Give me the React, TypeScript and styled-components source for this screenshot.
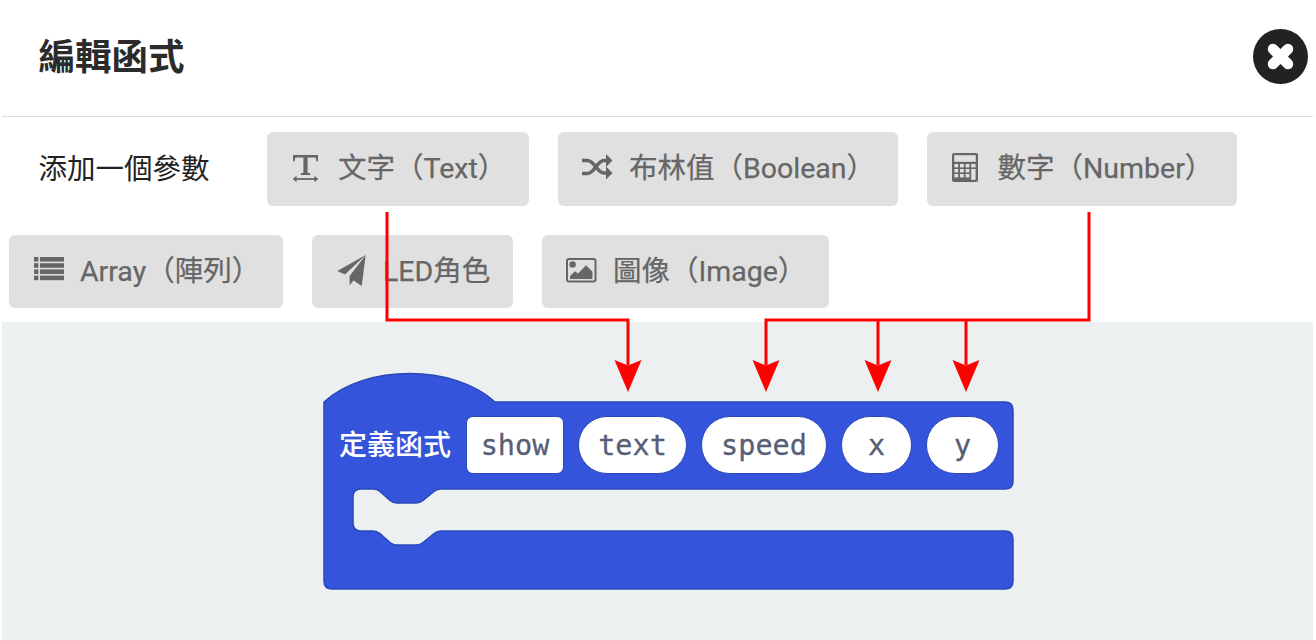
import React from "react";
import styled, { createGlobalStyle } from "styled-components";

const GlobalStyle = createGlobalStyle`
  html, body {
    margin: 0;
    background: #fff;
  }
`;

const cjk = `Roboto, "Noto Sans CJK TC", sans-serif`;

const TextIcon = () => (
  <IconSlot viewBox="0 0 32 32">
    <path d="M2 2H27V8.5H25.6L24.6 4.6H16.6V20H19.2V22H9.8V20H12.4V4.6H4.4L3.4 8.5H2Z" />
    <path d="M3 26H26" strokeWidth="1.8" stroke="#666" />
    <path d="M5.6 22.8 1.6 26 5.6 29.2ZM23.4 22.8 27.4 26 23.4 29.2Z" />
  </IconSlot>
);

const ShuffleIcon = () => (
  <IconSlot viewBox="0 0 32 32">
    <path
      d="M0 7.5H5.5C12.5 7.5 15 20 22 20H26M0 20.5H5.5C12.5 20.5 15 7.5 22 7.5H26"
      fill="none"
      stroke="#666"
      strokeWidth="3.6"
    />
    <path d="M24 1 30.5 7.5 24 14ZM24 13.5 30.5 20 24 26.5Z" />
  </IconSlot>
);

const CalculatorIcon = () => (
  <IconSlot viewBox="0 0 32 32">
    <rect x="1" y="0" width="26" height="29" rx="2" />
    <rect x="3.2" y="2.2" width="21.6" height="6.6" fill="#e0e0e0" />
    {[11, 16, 21].map((y) =>
      [3.4, 9, 14.6].map((x) => (
        <rect key={`${x}-${y}`} x={x} y={y} width="3.8" height="3.4" fill="#e0e0e0" />
      ))
    )}
    <rect x="20.2" y="11" width="4.4" height="3.4" fill="#e0e0e0" />
    <rect x="20.2" y="16" width="4.4" height="10.8" fill="#e0e0e0" />
  </IconSlot>
);

const ListIcon = () => (
  <IconSlot viewBox="0 0 32 32">
    {[1, 7.2, 13.4, 19.6].map((y) => (
      <g key={y}>
        <rect x="1" y={y} width="4.4" height="4.6" />
        <rect x="7" y={y} width="24" height="4.6" />
      </g>
    ))}
  </IconSlot>
);

const PlaneIcon = () => (
  <IconSlot viewBox="0 0 32 32">
    <path d="M29.7-1 1.3 15 9 18.6Z" />
    <path d="M29.7-1 13.6 20V29.2L17.6 24.4 25.7 30Z" />
  </IconSlot>
);

const ImageIcon = () => (
  <IconSlot viewBox="0 0 32 32">
    <rect x="1" y="3" width="28.5" height="22.5" rx="2" fill="none" stroke="#666" strokeWidth="2" />
    <circle cx="6.6" cy="8.4" r="3.2" />
    <path d="M4 23V20L9 15.2 12 17.4 20 9.2 26.4 15.4V23Z" />
  </IconSlot>
);

const CloseIcon = () => (
  <CloseGlyph viewBox="0 0 55 55">
    <circle cx="27.5" cy="27.5" r="27.5" fill="#222" />
    <path d="M20 20 35 35M35 20 20 35" stroke="#fff" strokeWidth="10.5" strokeLinecap="round" />
  </CloseGlyph>
);

const Arrows = () => (
  <ArrowLayer viewBox="0 0 1316 640">
    <path
      d="M387 212V320H628V365M1089 212V320H766V365M878 320V365M966 320V365"
      fill="none"
      stroke="#f00"
      strokeWidth="3"
    />
    {[628, 766, 878, 966].map((x) => (
      <path key={x} d={`M${x - 13.5} 360 L${x} 365.5 L${x + 13.5} 360 L${x} 392Z`} fill="#f00" />
    ))}
  </ArrowLayer>
);

const BlockOutline = () => (
  <BlockShape viewBox="0 0 692 218">
    <path
      d="M1 29C42-9 131-9 172 29H682Q690 29 690 37V108Q690 116 682 116H118Q114 116 111 118.5L100 127.5Q97 130 93 130H74Q70 130 67 127.5L57 118.5Q54 116 50 116H38Q30 116 30 124V150Q30 158 38 158H50Q54 158 57 160.5L67 169.5Q70 172 74 172H93Q97 172 100 169.5L111 160.5Q114 158 118 158H682Q690 158 690 166V208Q690 216 682 216H9Q1 216 1 208Z"
      fill="#3455db"
      stroke="#2b48b8"
      strokeWidth="1.5"
    />
  </BlockShape>
);

export default function App() {
  return (
    <Page>
      <GlobalStyle />
      <Header>
        <Title>編輯函式</Title>
        <CloseIcon />
      </Header>
      <ParamRows>
        <ParamRow>
          <ParamLabel>添加一個參數</ParamLabel>
          <ParamButton $width={262}>
            <TextIcon />
            <ButtonText>文字（Text）</ButtonText>
          </ParamButton>
          <ParamButton $width={339.5}>
            <ShuffleIcon />
            <ButtonText>布林值（Boolean）</ButtonText>
          </ParamButton>
          <ParamButton $width={310}>
            <CalculatorIcon />
            <ButtonText>數字（Number）</ButtonText>
          </ParamButton>
        </ParamRow>
        <ParamRow $second>
          <ParamButton $width={274}>
            <ListIcon />
            <ButtonText>Array（陣列）</ButtonText>
          </ParamButton>
          <ParamButton $width={201}>
            <PlaneIcon />
            <ButtonText>LED角色</ButtonText>
          </ParamButton>
          <ParamButton $width={287}>
            <ImageIcon />
            <ButtonText>圖像（Image）</ButtonText>
          </ParamButton>
        </ParamRow>
      </ParamRows>
      <Workspace>
        <Block>
          <BlockOutline />
          <BlockRow>
            <BlockLabel>定義函式</BlockLabel>
            <Field $width={98}>show</Field>
            <Field $pill $width={109}>text</Field>
            <Field $pill $width={126}>speed</Field>
            <Field $pill $width={71}>x</Field>
            <Field $pill $width={73}>y</Field>
          </BlockRow>
        </Block>
      </Workspace>
      <Arrows />
    </Page>
  );
}

const Page = styled.div`
  position: relative;
  width: 1316px;
  height: 640px;
  overflow: hidden;
  display: flex;
  flex-direction: column;
  font-family: ${cjk};
`;

const Header = styled.header`
  height: 113px;
  margin: 0 3px 0 2px;
  padding: 0 5px 3px 36.5px;
  display: flex;
  align-items: center;
  justify-content: space-between;
  border-bottom: 1px solid #dedede;
  flex-shrink: 0;
`;

const Title = styled.h1`
  margin: 0 0 5px;
  font-family: "Noto Sans CJK TC", sans-serif;
  font-size: 36.5px;
  font-weight: 700;
  color: #2b2b2b;
`;

const CloseGlyph = styled.svg`
  width: 55px;
  height: 55px;
`;

const ParamRows = styled.div`
  display: flex;
  flex-direction: column;
  gap: 29px;
  padding-top: 15px;
`;

const ParamRow = styled.div<{ $second?: boolean }>`
  display: flex;
  align-items: stretch;
  gap: 29px;
  height: ${({ $second }) => ($second ? "73px" : "74px")};
  padding-left: ${({ $second }) => ($second ? "9px" : "38.5px")};
`;

const ParamLabel = styled.span`
  align-self: center;
  width: 199.5px;
  margin-bottom: 6px;
  font-family: "Noto Sans CJK TC", sans-serif;
  font-size: 28.5px;
  color: #222;
  white-space: nowrap;
`;

const ParamButton = styled.div<{ $width: number }>`
  display: flex;
  align-items: center;
  gap: 15px;
  width: ${({ $width }) => $width}px;
  padding-left: 24px;
  box-sizing: border-box;
  background: #e0e0e0;
  border-radius: 6px;
  font-size: 28.5px;
  font-weight: 400;
  -webkit-text-stroke: 0.25px #666;
  color: #666;
  white-space: nowrap;
`;

const ButtonText = styled.span`
  margin-bottom: 6.5px;
`;

const IconSlot = styled.svg`
  width: 32px;
  height: 32px;
  flex-shrink: 0;
  overflow: visible;
  fill: #666;
`;

const Workspace = styled.main`
  flex: 1;
  margin: 14px 3px 0 2px;
  background: #ecf0f1;
  display: flex;
  justify-content: flex-start;
  padding: 51px 0 0 321px;
`;

const Block = styled.div`
  position: relative;
  width: 692px;
  height: 218px;
`;

const BlockShape = styled.svg`
  position: absolute;
  inset: 0;
  width: 692px;
  height: 218px;
  overflow: visible;
`;

const BlockRow = styled.div`
  position: relative;
  display: flex;
  align-items: center;
  gap: 14px;
  padding: 43px 0 0 16px;
`;

const BlockLabel = styled.span`
  margin: 0 1px 4px 0;
  font-family: "Noto Sans CJK TC", sans-serif;
  font-size: 28px;
  font-weight: 500;
  color: #fff;
  white-space: nowrap;
`;

const Field = styled.span<{ $pill?: boolean; $width: number }>`
  display: flex;
  align-items: center;
  justify-content: center;
  width: ${({ $width }) => $width}px;
  height: 58px;
  box-sizing: border-box;
  background: #fff;
  border: 1px solid #2b48b8;
  border-radius: ${({ $pill }) => ($pill ? "29px" : "7px")};
  font-family: "DejaVu Sans Mono", monospace;
  font-size: 28.5px;
  -webkit-text-stroke: 0.3px #575e75;
  color: #575e75;
`;

const ArrowLayer = styled.svg`
  position: absolute;
  inset: 0;
  width: 1316px;
  height: 640px;
  pointer-events: none;
`;
